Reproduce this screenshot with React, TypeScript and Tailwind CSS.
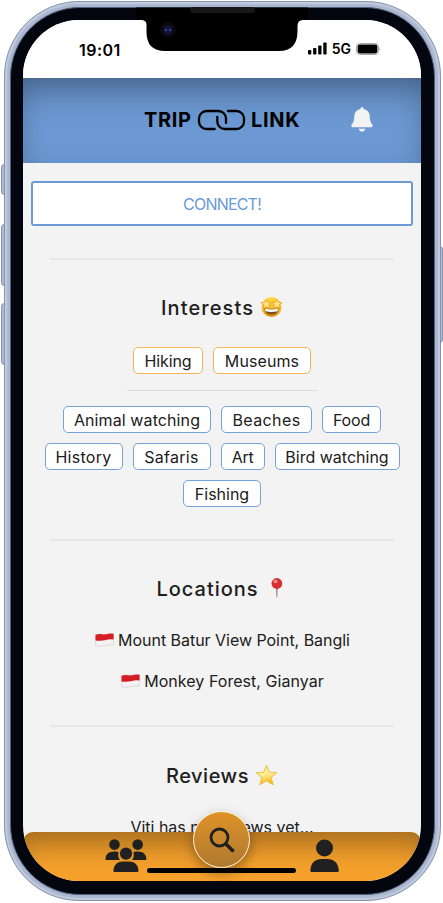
import type { ReactNode } from "react";

const primary = [
  { name: "Hiking", size: "w-[70px] tracking-[-0.1px]" },
  { name: "Museums", size: "w-[98px] tracking-[0.1px]" },
];

const rows = [
  [
    { name: "Animal watching", size: "w-[148px] tracking-[0.1px]" },
    { name: "Beaches", size: "w-[91px] tracking-[0.4px]" },
    { name: "Food", size: "w-[59px] tracking-[-0.2px]" },
  ],
  [
    { name: "History", size: "w-[78px] tracking-[0.3px]" },
    { name: "Safaris", size: "w-[78px] tracking-[0.3px]" },
    { name: "Art", size: "w-[44px] tracking-[-0.3px]" },
    { name: "Bird watching", size: "w-[125px]" },
  ],
  [{ name: "Fishing", size: "w-[78px]" }],
];

function Chip({ name, size, tone }: { name: string; size: string; tone: string }) {
  return (
    <span className={`flex h-[27px] shrink-0 items-center justify-center whitespace-nowrap rounded-[5px] border bg-white pt-px text-base leading-none ${size} ${tone}`}>
      {name}
    </span>
  );
}

function Heading({ children, icon }: { children: ReactNode; icon: ReactNode }) {
  return (
    <h2 className="flex h-7 items-center justify-center gap-[6px] whitespace-nowrap text-[20px] font-medium leading-7">
      {children}
      {icon}
    </h2>
  );
}

function Bell() {
  return (
    <svg width="22" height="25" viewBox="0 0 22 25" className="ml-auto" fill="#f3f3f3">
      <path d="M11 0Q12.5 0 12.6 2Q18.5 3.4 18.7 9.5Q18.8 15 21.2 17.2Q22.4 19 20.6 20.2H1.4Q-.4 19 .8 17.2Q3.2 15 3.3 9.5Q3.5 3.4 9.4 2Q9.5 0 11 0Z" />
      <path d="M7.8 21.8H14.2Q13.7 24.6 11 24.6Q8.3 24.6 7.8 21.8Z" />
    </svg>
  );
}

function StarEyes() {
  return (
    <svg width="23" height="22" viewBox="0 0 23 22" className="mb-[2px]">
      <defs>
        <linearGradient id="face" x1="0" y1="0" x2="0" y2="1">
          <stop offset="0" stopColor="#ffda43" />
          <stop offset="0.6" stopColor="#fbb722" />
          <stop offset="1" stopColor="#d98208" />
        </linearGradient>
      </defs>
      <circle cx="11.5" cy="11" r="10" fill="url(#face)" />
      <path d="M4.2 12Q11.5 14 18.8 12Q18 18.6 11.5 18.6Q5 18.6 4.2 12Z" fill="#7a4f18" />
      <path d="M4.8 12.4Q11.5 14.4 18.2 12.4L17.4 15.2Q11.5 16.8 5.6 15.2Z" fill="#fff" />
      <path d="M6.2 3.5L7.6 6.4L11 6.5L8.7 8.8L9.6 12L6.4 10.5L3.5 12L3.9 8.8L.8 6.7L4.5 6.3Z" fill="#ffe68a" stroke="#e0a02a" strokeWidth=".7" />
      <path d="M16.8 3.5L15.4 6.4L12 6.5L14.3 8.8L13.4 12L16.6 10.5L19.5 12L19.1 8.8L22.2 6.7L18.5 6.3Z" fill="#ffe68a" stroke="#e0a02a" strokeWidth=".7" />
    </svg>
  );
}

function Pin() {
  return (
    <svg width="23" height="22" viewBox="0 0 23 22" className="mb-[3px]">
      <path d="M10.9 9H12.9L12.3 20.5H11.4Z" fill="#9a8b83" />
      <circle cx="11.9" cy="6.5" r="5.4" fill="#d92f30" />
      <ellipse cx="10.5" cy="4.5" rx="2.1" ry="1.7" fill="#f58b88" />
    </svg>
  );
}

function Star() {
  return (
    <svg width="23" height="22" viewBox="0 0 23 22" className="mb-[3px]">
      <defs>
        <linearGradient id="gold" x1="0" y1="0" x2="0.2" y2="1">
          <stop offset="0" stopColor="#ffe66b" />
          <stop offset="0.5" stopColor="#fff09a" />
          <stop offset="1" stopColor="#fdb913" />
        </linearGradient>
      </defs>
      <path d="M11.5 1.2L14.3 8.1L22 8.7L16.1 13.5L18.2 20.8L11.5 16.8L4.8 20.8L6.9 13.5L1 8.7L8.7 8.1Z" fill="url(#gold)" stroke="#edb12d" strokeWidth=".8" strokeLinejoin="round" />
    </svg>
  );
}

function Flag() {
  return (
    <svg width="19" height="14" viewBox="0 0 19 14" className="relative left-[0.5px] mb-px">
      <path d="M.7 1.8C5 .2 8 1.9 11 1.3Q15 .2 18.4 .8V12Q14 11.3 11 12.4Q6 13.6 .7 12.8Z" fill="#f4f2f2" stroke="#c8c8c8" strokeWidth=".5" />
      <path d="M.5 1.8C5 .2 8 1.9 11 1.3Q15 .2 18.6 .8V6.5Q14 5.9 11 7Q6 8.1 .5 7.4Z" fill="#d61c25" />
    </svg>
  );
}

function Place({ children, tracking }: { children: ReactNode; tracking: string }) {
  return (
    <p className={`flex h-6 items-center justify-center gap-[5px] whitespace-nowrap text-base leading-6 ${tracking}`}>
      <Flag />
      <span>{children}</span>
    </p>
  );
}

function Group() {
  return (
    <svg width="42" height="34" viewBox="0 0 42 34" fill="#202020">
      <circle cx="9.5" cy="5.6" r="5.3" />
      <circle cx="32.7" cy="5.6" r="5.3" />
      <path d="M1.4 21Q.3 21 .4 20Q1 12.6 9 12.6H10.5Q12.3 12.6 13.6 13.3Q12.2 17.5 15 21Z" />
      <path d="M40.4 21Q41.5 21 41.4 20Q40.8 12.6 32.8 12.6H31.5Q29.6 12.6 28.4 13.3Q29.8 17.5 27 21Z" />
      <circle cx="21" cy="14.6" r="6.1" />
      <path d="M9.5 33Q8.3 33 8.4 31.8Q9.2 22.6 18 22.6H24Q32.8 22.6 33.5 31.8Q33.5 33 32.4 33Z" />
    </svg>
  );
}

export default function App() {
  return (
    <div className="relative h-[903px] w-[443px] overflow-hidden bg-white pl-1 pt-px font-['Inter','Liberation_Sans',sans-serif] text-[#202020]">
      <i className="absolute left-px top-[164px] h-[31px] w-1 rounded-l-sm border border-[#8796b0] bg-[#aebbd2]" />
      <i className="absolute left-px top-[224px] h-[62px] w-1 rounded-l-sm border border-[#8796b0] bg-[#aebbd2]" />
      <i className="absolute left-px top-[303px] h-[62px] w-1 rounded-l-sm border border-[#8796b0] bg-[#aebbd2]" />
      <i className="absolute right-0 top-[246px] h-[97px] w-1 rounded-r-sm border border-[#8796b0] bg-[#aebbd2]" />

      <div className="relative h-[900px] w-[437px] rounded-[75px] border border-[#8794ad] bg-[#a8b5cf] p-[5px] shadow-[inset_0_0_2px_2px_#c5cfdf]">
        <div className="h-[888px] w-[425px] rounded-[70px] border border-[#53617c] bg-[#03060e] pl-[12px] pt-[12px]">
          <div className="relative flex h-[861px] w-[398px] flex-col overflow-hidden rounded-[56px] bg-[#f3f3f3]">
            <div className="flex h-[58px] shrink-0 items-start justify-between bg-white pl-[56px] pr-[40px] pt-[20px] text-black">
              <time className="text-[16px] font-semibold leading-5 tracking-[0.45px]">19:01</time>
              <div className="flex h-[17px] items-center gap-[5px]">
                <svg width="19" height="13" viewBox="0 0 19 13">
                  <rect x="0" y="8" width="3.3" height="4.5" rx=".8" />
                  <rect x="5.1" y="6" width="3.3" height="6.5" rx=".8" />
                  <rect x="10.2" y="3.5" width="3.3" height="9" rx=".8" />
                  <rect x="15.3" y="0.5" width="3.3" height="12" rx=".8" />
                </svg>
                <span className="text-[14px] font-semibold leading-4">5G</span>
                <svg width="25" height="12" viewBox="0 0 25 12">
                  <rect x=".5" y=".5" width="22" height="11" rx="3" fill="#fff" stroke="#aaa" />
                  <rect x="1.6" y="1.6" width="19.8" height="8.8" rx="1.8" />
                  <path d="M23.5 4Q25 6 23.5 8Z" fill="#888" />
                </svg>
              </div>
            </div>

            <header className="flex h-[85px] shrink-0 items-center bg-[#6c99d3] pb-[2px] pl-[121px] pr-[48px] text-black shadow-[inset_0_24px_36px_-14px_rgba(0,0,0,0.36),inset_0_0_24px_rgba(0,0,0,0.08)]">
              <b className="w-[48px] whitespace-nowrap text-[20px] font-bold leading-6 tracking-[0.6px]">TRIP</b>
              <svg width="49" height="22" viewBox="197.5 108.5 49 22" className="ml-[5px]" fill="none" stroke="#000" strokeWidth="2.3" strokeLinecap="round">
                <path d="M215.2 128.5H207A7.5 7.5 0 0 1 199.5 121V118A7.5 7.5 0 0 1 207 110.5H219A7.5 7.5 0 0 1 226.5 118V122.5" />
                <path d="M217.8 116.5V121A7.5 7.5 0 0 0 225.3 128.5H237A7.5 7.5 0 0 0 244.5 121V118A7.5 7.5 0 0 0 237 110.5H228.5" />
              </svg>
              <b className="ml-[5px] w-[50px] whitespace-nowrap text-[20px] font-bold leading-6 tracking-[0.7px]">LINK</b>
              <Bell />
            </header>

            <main className="flex h-[684px] shrink-0 flex-col items-center overflow-hidden pt-[18px]">
              <button className="h-[45px] w-[382px] shrink-0 rounded-[3px] border-2 border-[#6c9ad5] bg-white text-[16px] leading-none tracking-[-0.8px] text-[#6c9ad5]">
                CONNECT!
              </button>
              <hr className="mt-[32px] w-[344px] shrink-0 border-t-2 border-[#e7e7e7]" />
              <div className="mt-[34px]"><Heading icon={<StarEyes />}><span className="tracking-[1.1px]">Interests</span></Heading></div>
              <div className="mt-[25px] flex gap-[10px]">
                {primary.map((item) => <Chip key={item.name} {...item} tone="border-[#f7b458]" />)}
              </div>
              <hr className="mt-4 w-[191px] shrink-0 border-[#dcdcdc]" />
              <div className="mt-[15px] flex flex-col items-center gap-[10px]">
                {rows.map((row, index) => (
                  <div key={index} className="flex gap-[10px]">
                    {row.map((item) => <Chip key={item.name} {...item} tone="border-[#76a2d9]" />)}
                  </div>
                ))}
              </div>
              <hr className="mt-[32px] w-[344px] shrink-0 border-t-2 border-[#e7e7e7]" />
              <div className="mt-[34px]"><Heading icon={<Pin />}><span className="tracking-[1px]">Locations</span></Heading></div>
              <div className="mt-[25px] flex flex-col gap-[17px]">
                <Place tracking="tracking-[-0.03px]">Mount Batur View Point, Bangli</Place>
                <Place tracking="tracking-[0.04px]">Monkey Forest, Gianyar</Place>
              </div>
              <hr className="mt-[32px] w-[344px] shrink-0 border-t-2 border-[#e7e7e7]" />
              <div className="mt-[35px]"><Heading icon={<Star />}><span className="tracking-[0.5px]">Reviews</span></Heading></div>
              <p className="mt-[25px] h-6 shrink-0 whitespace-nowrap text-base leading-6">Viti has no reviews yet...</p>
            </main>

            <nav className="relative -mt-[15px] flex h-[49px] shrink-0 items-start justify-between rounded-t-[10px] bg-[#f5a12c] pl-[82px] pr-[82px] pt-[7px] shadow-[inset_0_24px_28px_-12px_rgba(0,0,0,0.34)]">
              <Group />
              <svg width="29" height="34" viewBox="0 0 29 34" fill="#202020">
                <circle cx="14.5" cy="9" r="8.5" />
                <path d="M1.5 33Q.3 33 .3 31.8Q1 20 12 20H17Q28 20 28.8 31.8Q28.8 33 27.5 33Z" />
              </svg>
              <div className="absolute bottom-[8px] left-[124px] h-[5px] w-[149px] rounded-full bg-black" />
              <div className="absolute -top-[21px] left-[170px] flex size-[57px] items-center justify-center rounded-full border border-[#fff0d8] bg-linear-to-b from-[#df9327] to-[#ae792f] shadow-[0_5px_12px_rgba(0,0,0,0.35)]">
                <svg width="28" height="28" viewBox="0 0 28 28" fill="none" stroke="#202020">
                  <circle cx="11.5" cy="11.5" r="8.5" strokeWidth="2.8" />
                  <path d="M18 18L24.5 24.5" strokeWidth="3.5" strokeLinecap="round" />
                </svg>
              </div>
            </nav>
          </div>
        </div>

        <svg className="absolute left-[131px] top-[5px]" width="180" height="47" viewBox="136 7 180 47">
          <path d="M136 7.5H308V20H303Q297.5 20 297.5 26V31Q297.5 51 279 51H165Q146.5 51 146.5 32V25Q146.5 20 141 20H136Z" fill="#000" />
          <rect x="190" y="7" width="65" height="6" rx="3" fill="#171717" />
          <circle cx="168" cy="30" r="8" fill="#08080e" />
          <circle cx="168" cy="30" r="4.5" fill="#11143b" />
          <circle cx="166" cy="30" r="1.3" fill="#34388a" />
          <circle cx="170" cy="30" r="1.3" fill="#34388a" />
        </svg>
      </div>
    </div>
  );
}
